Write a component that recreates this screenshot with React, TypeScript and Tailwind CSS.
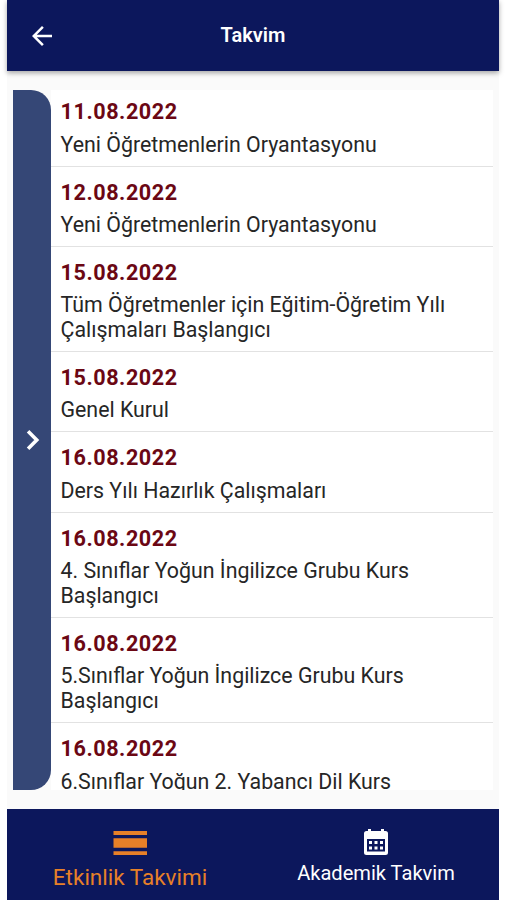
const events = [
  { date: '11.08.2022', title: 'Yeni Öğretmenlerin Oryantasyonu' },
  { date: '12.08.2022', title: 'Yeni Öğretmenlerin Oryantasyonu' },
  { date: '15.08.2022', title: 'Tüm Öğretmenler için Eğitim-Öğretim Yılı Çalışmaları Başlangıcı' },
  { date: '15.08.2022', title: 'Genel Kurul' },
  { date: '16.08.2022', title: 'Ders Yılı Hazırlık Çalışmaları' },
  { date: '16.08.2022', title: '4. Sınıflar Yoğun İngilizce Grubu Kurs Başlangıcı' },
  { date: '16.08.2022', title: '5.Sınıflar Yoğun İngilizce Grubu Kurs Başlangıcı' },
  { date: '16.08.2022', title: '6.Sınıflar Yoğun 2. Yabancı Dil Kurs' },
];

function Header() {
  return (
    <header className="relative z-10 h-[70.5px] shrink-0 bg-[#0c175c] shadow-[0_2px_5px_rgba(0,0,0,0.35)] grid grid-cols-[1fr_auto_1fr] items-center text-white">
      <button className="ml-[20px] mt-px w-[30px] h-[30px]" aria-label="Geri">
        <svg viewBox="0 0 24 24" className="w-[30px] h-[30px]" fill="currentColor">
          <path d="M20 11H7.83l5.59-5.59L12 4l-8 8 8 8 1.41-1.41L7.83 13H20v-2z" />
        </svg>
      </button>
      <h1 className="text-[20px] font-semibold">Takvim</h1>
    </header>
  );
}

function EventList() {
  return (
    <ul className="flex-1 min-w-0 overflow-hidden bg-white">
      {events.map((event, i) => (
        <li
          key={i}
          className="pl-[10px] pr-9 pt-[13px] pb-[8.8px] border-b border-[#e2e2e2] first:pt-[9.8px]"
        >
          <p className="text-[21.6px] leading-[25.2px] font-bold text-[#6b0714] tracking-[0.55px]">{event.date}</p>
          <p className="mt-[7px] text-[21.35px] leading-[25.2px] text-[#262626]">{event.title}</p>
        </li>
      ))}
    </ul>
  );
}

function BottomNav() {
  return (
    <nav className="h-[91px] shrink-0 bg-[#0c175c] grid grid-cols-2 text-white">
      <button className="flex flex-col items-center pt-[14px] text-[#e78028]">
        <svg viewBox="0 0 40 40" className="w-10 h-10" fill="currentColor">
          <path d="M3.500 8h33.500v4H3.500zM3.500 15.200h33.500v9.600H3.500zM3.500 28.200h33.500v3.800H3.500z" />
        </svg>
        <span className="text-[22.5px] leading-[26px] mt-px">Etkinlik Takvimi</span>
      </button>
      <button className="flex flex-col items-center pt-[19px]">
        <svg viewBox="0 0 26 28" className="w-[26px] h-7" fill="none">
          <path
            fill="currentColor"
            fillRule="evenodd"
            d="M5 1h3v2h10V1h3v2h1.500a2.500 2.500 0 0 1 2.500 2.500v19a2.500 2.500 0 0 1-2.500 2.500h-19A2.500 2.500 0 0 1 1 24.500v-19A2.500 2.500 0 0 1 3.500 3H5zM4 11v12.500h18V11z"
          />
          <path
            fill="currentColor"
            d="M6 13h3v3H6zM11.500 13h3v3h-3zM17 13h3v3h-3zM6 18.500h3v3H6zM11.500 18.500h3v3h-3zM17 18.500h3v3h-3z"
          />
        </svg>
        <span className="text-[20.1px] leading-[24px] mt-[5px]">Akademik Takvim</span>
      </button>
    </nav>
  );
}

export default function App() {
  return (
    <div className="w-[507px] h-[900px] overflow-hidden bg-white pl-[7px] pr-[8px] font-['Roboto',sans-serif]">
      <div className="h-full flex flex-col bg-[#fafafa]">
        <Header />
        <main className="flex-1 min-h-0 flex px-[6px] pt-[19px] pb-[19px]">
          <button
            className="w-[37.5px] shrink-0 rounded-r-[20px] bg-[#354776] flex items-center justify-center text-white"
            aria-label="Aç"
          >
            <svg viewBox="0 0 24 24" className="w-8 h-8 ml-[3px]" fill="none" stroke="currentColor" strokeWidth="2.700">
              <path d="M8.300 5.500 14.800 12l-6.500 6.500" />
            </svg>
          </button>
          <EventList />
        </main>
        <BottomNav />
      </div>
    </div>
  );
}
